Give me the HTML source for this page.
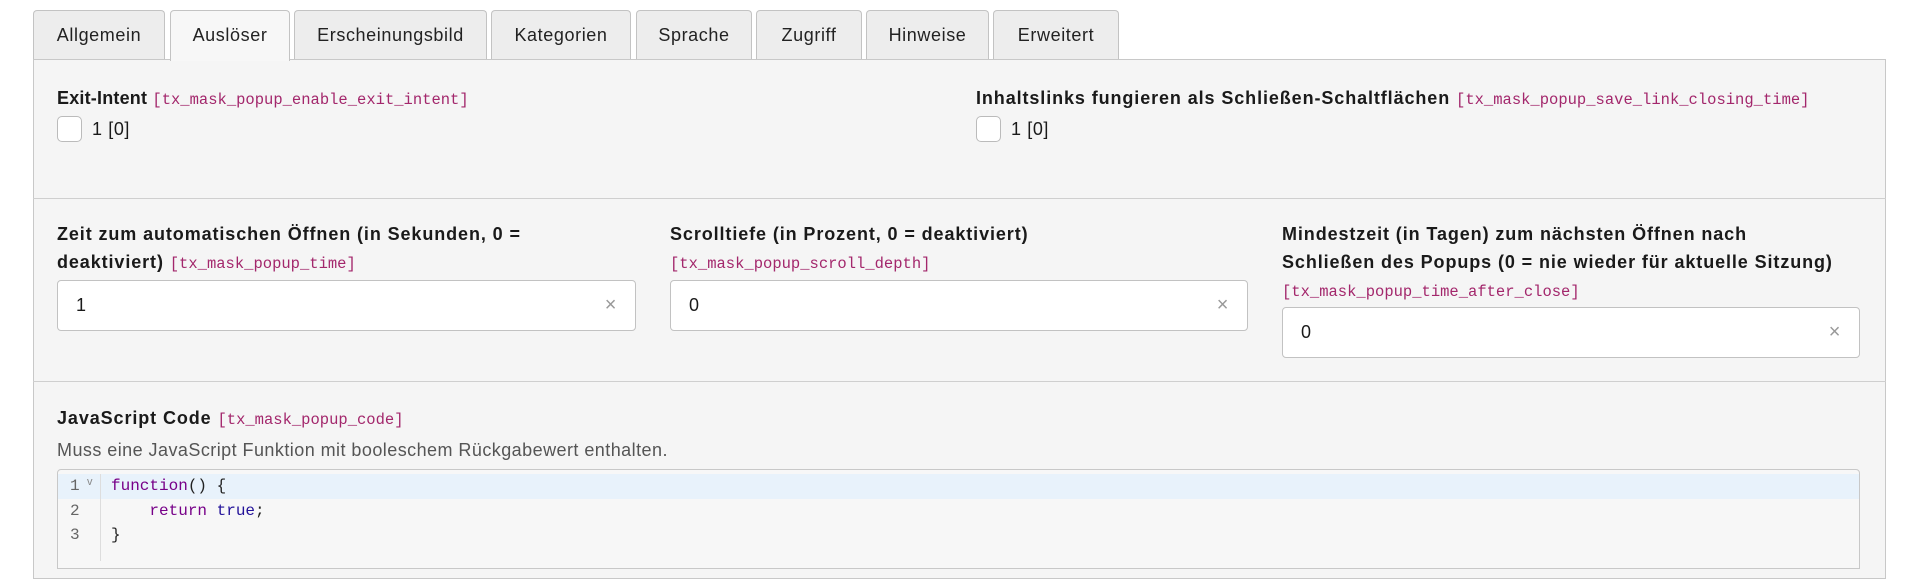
<!DOCTYPE html>
<html><head><meta charset="utf-8"><style>
body{margin:0;width:1920px;height:561px;background:#fff;font-family:"Liberation Sans","DejaVu Sans",sans-serif;color:#1a1a1a;position:relative;overflow:hidden;letter-spacing:0.6px}
.a{position:absolute}
.tab{position:absolute;top:10px;height:49px;background:#ededed;border:1px solid #c3c3c3;border-bottom:none;border-radius:4px 4px 0 0;box-sizing:border-box;font-size:18px;line-height:48px;text-align:center;color:#222}
.tab.act{background:#f7f7f7;height:51px;z-index:2}
.panel{position:absolute;left:33px;top:59px;width:1853px;height:520px;background:#f5f5f5;border:1px solid #c8c8c8;box-sizing:border-box}
.hr{position:absolute;left:33px;width:1853px;height:1px;background:#cfcfcf}
.lbl{position:absolute;font-size:18px;font-weight:bold;line-height:28px;color:#1a1a1a;letter-spacing:0.9px}
.m{font-family:"Liberation Mono","DejaVu Sans Mono",monospace;font-weight:normal;font-size:15.5px;color:#a3276c;letter-spacing:0}
.cb{position:absolute;width:25px;height:26px;background:#fff;border:1px solid #bbb;border-radius:5px;box-sizing:border-box}
.ct{position:absolute;font-size:18px;line-height:26px}
.inp{position:absolute;height:51px;background:#fff;border:1px solid #c2c2c2;border-radius:4px;box-sizing:border-box;font-size:18px;line-height:49px;padding-left:18px}
.inp .x{position:absolute;right:18px;top:0;color:#999;font-size:20px}
.code{font-family:"Liberation Mono","DejaVu Sans Mono",monospace;font-size:16px;letter-spacing:0}
</style></head><body>
<div class="panel"></div>
<div class="tab" style="left:33px;width:132px">Allgemein</div>
<div class="tab act" style="left:170px;width:120px">Auslöser</div>
<div class="tab" style="left:294px;width:193px">Erscheinungsbild</div>
<div class="tab" style="left:491px;width:140px">Kategorien</div>
<div class="tab" style="left:636px;width:116px">Sprache</div>
<div class="tab" style="left:756px;width:106px">Zugriff</div>
<div class="tab" style="left:866px;width:123px">Hinweise</div>
<div class="tab" style="left:993px;width:126px">Erweitert</div>

<div class="lbl" style="left:57px;top:84px;letter-spacing:0.2px">Exit-Intent <span class="m">[tx_mask_popup_enable_exit_intent]</span></div>
<div class="cb" style="left:57px;top:116px"></div><div class="ct" style="left:92px;top:116px">1 [0]</div>
<div class="lbl" style="left:976px;top:84px">Inhaltslinks fungieren als Schließen-Schaltflächen <span class="m">[tx_mask_popup_save_link_closing_time]</span></div>
<div class="cb" style="left:976px;top:116px"></div><div class="ct" style="left:1011px;top:116px">1 [0]</div>

<div class="hr" style="top:198px"></div>

<div class="lbl" style="left:57px;top:220px;width:560px">Zeit zum automatischen Öffnen (in Sekunden, 0 = deaktiviert) <span class="m">[tx_mask_popup_time]</span></div>
<div class="inp" style="left:57px;top:280px;width:579px">1<span class="x">×</span></div>
<div class="lbl" style="left:670px;top:220px;width:580px">Scrolltiefe (in Prozent, 0 = deaktiviert)<br><span class="m">[tx_mask_popup_scroll_depth]</span></div>
<div class="inp" style="left:670px;top:280px;width:578px">0<span class="x">×</span></div>
<div class="lbl" style="left:1282px;top:220px;width:620px">Mindestzeit (in Tagen) zum nächsten Öffnen nach<br>Schließen des Popups (0 = nie wieder für aktuelle Sitzung)<br><span class="m">[tx_mask_popup_time_after_close]</span></div>
<div class="inp" style="left:1282px;top:307px;width:578px">0<span class="x">×</span></div>

<div class="hr" style="top:381px"></div>

<div class="lbl" style="left:57px;top:404px">JavaScript Code <span class="m">[tx_mask_popup_code]</span></div>
<div class="a" style="left:57px;top:437px;font-size:18px;line-height:26px;color:#555;letter-spacing:0.45px">Muss eine JavaScript Funktion mit booleschem Rückgabewert enthalten.</div>
<div class="a" style="left:57px;top:469px;width:1803px;height:100px;background:#f7f7f7;border:1px solid #c8c8c8;border-radius:4px 4px 0 0;box-sizing:border-box"></div>
<div class="a" style="left:58px;top:474px;width:1801px;height:25px;background:#e8f2fb"></div>
<div class="a" style="left:100px;top:474px;width:1px;height:87px;background:#ddd"></div>
<div class="a code" style="left:70px;top:474px;line-height:24.5px;color:#666">1<br>2<br>3</div>
<div class="a" style="left:87px;top:476px;font-size:11px;color:#888">v</div>
<div class="a code" style="left:111px;top:474px;line-height:24.5px;white-space:pre;color:#222"><span style="color:#770088">function</span>() {
    <span style="color:#770088">return</span> <span style="color:#221199">true</span>;
}</div>
</body></html>
